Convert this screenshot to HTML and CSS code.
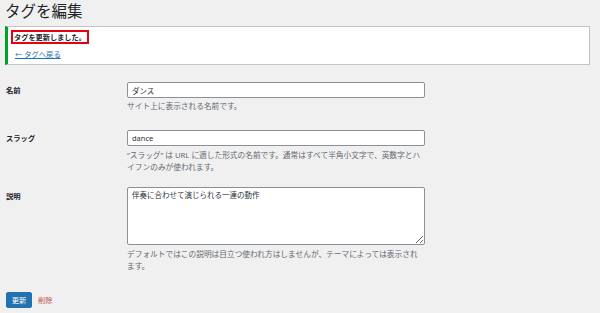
FILE: index.html
```html
<!DOCTYPE html>
<html lang="ja">
<head>
<meta charset="utf-8">
<title>タグを編集</title>
<link rel="stylesheet" href="styles.css">
</head>
<body>
<div class="wrap">
  <h1 class="title">タグを編集</h1>
  <div class="notice">
    <p class="notice-msg"><span class="mark">タグを更新しました。</span></p>
    <p class="notice-back"><a href="#">← タグへ戻る</a></p>
  </div>
  <form class="form">
    <div class="row">
      <label class="th" for="name">名前</label>
      <div class="td">
        <input class="field" id="name" type="text" value="ダンス">
        <p class="desc">サイト上に表示される名前です。</p>
      </div>
    </div>
    <div class="row">
      <label class="th" for="slug">スラッグ</label>
      <div class="td">
        <input class="field" id="slug" type="text" value="dance">
        <p class="desc">“スラッグ” は URL に適した形式の名前です。通常はすべて半角小文字で、英数字とハイフンのみが使われます。</p>
      </div>
    </div>
    <div class="row row-area">
      <label class="th" for="desc">説明</label>
      <div class="td">
        <textarea class="area" id="desc">伴奏に合わせて演じられる一連の動作</textarea>
        <p class="desc desc-area">デフォルトではこの説明は目立つ使われ方はしませんが、テーマによっては表示されます。</p>
      </div>
    </div>
    <div class="actions">
      <button type="button" class="btn">更新</button>
      <a href="#" class="delete">削除</a>
    </div>
  </form>
</div>
</body>
</html>
```

FILE: styles.css
```css
html, body {
  margin: 0;
  padding: 0;
  background: #f0f0f1;
}
body {
  font-family: "Noto Sans", "Noto Sans CJK JP", sans-serif;
  color: #1d2327;
  font-size: 7.7px;
  line-height: 10px;
}
.wrap {
  padding: 0 10px 0 5px;
}
.title {
  margin: 0;
  font-size: 15.5px;
  line-height: 22px;
  font-weight: 400;
  color: #1d2327;
}
.notice {
  margin-top: 4px;
  background: #fff;
  border: 1px solid #c3c4c7;
  border-left: 3px solid #00a32a;
  padding: 3px 3px 5px 3px;
  height: 39px;
  box-sizing: border-box;
}
.notice p {
  margin: 0;
}
.mark {
  display: inline-block;
  border: 2px solid #e60012;
  padding: 0 1px;
  font-weight: 700;
  font-size: 7.2px;
  line-height: 10px;
}
.notice-back {
  margin-top: 5px !important;
  padding-left: 4px;
  font-size: 7.3px;
}
.notice-back a {
  color: #2271b1;
  text-decoration: underline;
}
.form {
  margin-top: 8px;
}
.row {
  display: grid;
  grid-template-columns: 122px 298px;
}
.th {
  padding: 12px 0 0 1px;
  font-weight: 700;
  font-size: 7.3px;
  line-height: 10px;
}
.td {
  padding: 9px 0 8px 0;
}
.row-area .td {
  padding-top: 5px;
}
.row-area .th {
  padding-top: 9px;
}
.field {
  display: block;
  box-sizing: border-box;
  width: 298px;
  height: 16px;
  margin: 0;
  padding: 0 4px;
  border: 1px solid #8c8f94;
  border-radius: 2px;
  background: #fff;
  font-family: "Noto Sans", "Noto Sans CJK JP", sans-serif;
  font-size: 7.5px;
  color: #2c3338;
}
.area {
  display: block;
  box-sizing: border-box;
  width: 298px;
  height: 58px;
  margin: 0;
  padding: 2px 4px;
  border: 1px solid #8c8f94;
  border-radius: 2px;
  background: #fff;
  font-family: "Noto Sans", "Noto Sans CJK JP", sans-serif;
  font-size: 7.5px;
  line-height: 10px;
  color: #2c3338;
}
.desc {
  margin: 2px 0 0 0;
  color: #646970;
  line-height: 12.5px;
}
.row + .row .desc {
  margin-top: 3px;
}
.row-area .desc-area {
  margin-top: 5px;
}
.actions {
  display: flex;
  align-items: center;
  gap: 6px;
  margin-top: 11px;
  padding-left: 1px;
}
.btn {
  box-sizing: border-box;
  height: 16px;
  width: 26px;
  padding: 0;
  border: 1px solid #2271b1;
  border-radius: 2px;
  background: #2271b1;
  color: #fff;
  font-family: "Noto Sans", "Noto Sans CJK JP", sans-serif;
  font-size: 7.3px;
  line-height: 14px;
}
.delete {
  color: #c0504d;
  font-size: 7.3px;
  text-decoration: none;
}
```
